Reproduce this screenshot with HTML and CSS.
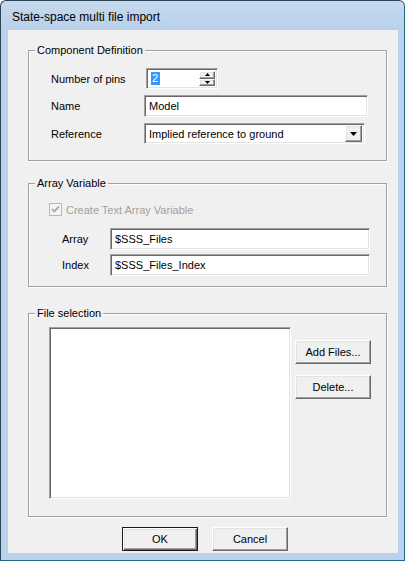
FILE: index.html
```html
<!DOCTYPE html>
<html>
<head>
<meta charset="utf-8">
<title>State-space multi file import</title>
<link rel="stylesheet" href="styles.css">
</head>
<body>
<div class="window">
  <div class="titlebar"><span class="title">State-space multi file import</span></div>
  <div class="client">

    <div class="group g1">
      <span class="legend">Component Definition</span>
      <div class="row r-pins">
        <span class="lbl">Number of pins</span>
        <div class="spin sunken">
          <span class="spin-text"><span class="sel">2</span><span class="caret"></span></span>
          <div class="spin-btns">
            <div class="sbtn raised"><svg width="5" height="3" viewBox="0 0 5 3"><path d="M2.5 0 L5 3 L0 3 Z" fill="#000"/></svg></div>
            <div class="sbtn raised"><svg width="5" height="3" viewBox="0 0 5 3"><path d="M0 0 L5 0 L2.5 3 Z" fill="#000"/></svg></div>
          </div>
        </div>
      </div>
      <div class="row r-name">
        <span class="lbl">Name</span>
        <div class="edit sunken w-name">Model</div>
      </div>
      <div class="row r-ref">
        <span class="lbl">Reference</span>
        <div class="combo sunken">
          <span class="combo-text">Implied reference to ground</span>
          <div class="ddbtn raised"><svg width="7" height="4" viewBox="0 0 7 4"><path d="M0 0 L7 0 L3.5 4 Z" fill="#000"/></svg></div>
        </div>
      </div>
    </div>

    <div class="group g2">
      <span class="legend">Array Variable</span>
      <div class="check-row">
        <svg class="chk" width="13" height="13" viewBox="0 0 13 13">
          <rect x="0.5" y="0.5" width="12" height="12" fill="#f4f4f4" stroke="#b8b8b8"/>
          <path d="M3 6 L5.2 8.4 L10 3.6" fill="none" stroke="#a8a8a8" stroke-width="1.8"/>
        </svg>
        <span class="disabled">Create Text Array Variable</span>
      </div>
      <div class="row r-array">
        <span class="lbl2">Array</span>
        <div class="edit sunken w-arr">$SSS_Files</div>
      </div>
      <div class="row r-index">
        <span class="lbl2">Index</span>
        <div class="edit sunken w-arr">$SSS_Files_Index</div>
      </div>
    </div>

    <div class="group g3">
      <span class="legend">File selection</span>
      <div class="files">
        <div class="listbox sunken"></div>
        <div class="side-btns">
          <div class="btn raised">Add Files...</div>
          <div class="btn raised">Delete...</div>
        </div>
      </div>
    </div>

    <div class="footer">
      <div class="btn default">OK</div>
      <div class="btn raised">Cancel</div>
    </div>

  </div>
</div>
</body>
</html>
```

FILE: styles.css
```css
* { box-sizing: border-box; }
html, body { margin: 0; padding: 0; }
body {
  width: 405px;
  height: 561px;
  background: #ffffff;
  font-family: "Liberation Sans", Arial, sans-serif;
  font-size: 11px;
  color: #000;
}
.window {
  width: 405px;
  height: 561px;
  border: 1px solid #2c4556;
  border-right-color: #1f6d86;
  border-bottom-color: #1f6d86;
  border-radius: 6px 6px 0 0;
  background: linear-gradient(#c6d9ee, #b9d1ea 28px, #b9d1ea);
  display: flex;
  flex-direction: column;
}
.titlebar {
  height: 29px;
  flex: none;
  display: flex;
  align-items: center;
  padding-left: 11px;
  padding-top: 3px;
}
.title {
  font-size: 12px;
  color: #000;
}
.client {
  margin: 0 6px 7px 7px;
  flex: 1;
  background: #f0f0f0;
  padding-top: 20px;
}

/* 3D borders */
.sunken {
  border: 1px solid;
  border-color: #a0a0a0 #ffffff #ffffff #a0a0a0;
  box-shadow: inset 1px 1px 0 #696969, inset -1px -1px 0 #e3e3e3;
  background: #fff;
}
.raised {
  border: 1px solid;
  border-color: #ffffff #696969 #696969 #ffffff;
  box-shadow: inset -1px -1px 0 #a0a0a0, inset 1px 1px 0 #e3e3e3;
  background: #f0f0f0;
}

/* group boxes */
.group {
  position: relative;
  margin-left: 20px;
  margin-right: 11px;
  border: 1px solid #a0a0a0;
  box-shadow: inset 1px 1px 0 #ffffff, 1px 1px 0 #ffffff;
}
.legend {
  position: absolute;
  top: -7px;
  left: 6px;
  padding: 0 2px;
  background: #f0f0f0;
  line-height: 13px;
}
.g1 { height: 111px; padding: 17px 0 0 22px; }
.g2 { height: 104px; margin-top: 22px; padding: 19px 0 0 20px; }
.g3 { height: 204px; margin-top: 26px; padding: 13px 0 0 20px; }

.row {
  display: flex;
  align-items: center;
}
.lbl { width: 93px; flex: none; }
.r-name { margin-top: 6px; }
.r-ref { margin-top: 6px; }

.spin {
  margin-left: 2px;
  width: 72px;
  height: 21px;
  display: flex;
  padding: 2px;
}
.spin-text {
  flex: 1;
  display: flex;
  align-items: center;
  padding-left: 2px;
}
.sel {
  background: #3399ff;
  color: #fff;
  padding: 0 1px;
  line-height: 13px;
}
.caret {
  width: 1px;
  height: 13px;
  background: #e07030;
}
.spin-btns {
  width: 16px;
  display: flex;
  flex-direction: column;
  justify-content: space-between;
}
.sbtn {
  height: 8px;
  display: flex;
  align-items: center;
  justify-content: center;
}

.edit {
  height: 22px;
  display: flex;
  align-items: center;
  padding-left: 4px;
}
.w-name { width: 224px; }

.combo {
  width: 221px;
  height: 21px;
  display: flex;
  align-items: center;
  padding: 2px;
}
.combo-text { flex: 1; padding-left: 2px; }
.ddbtn {
  width: 17px;
  height: 17px;
  display: flex;
  align-items: center;
  justify-content: center;
}

/* array group */
.check-row {
  display: flex;
  align-items: center;
  height: 13px;
}
.chk { flex: none; display: block; }
.disabled { color: #a0a0a0; margin-left: 4px; }
.lbl2 { width: 61px; flex: none; padding-left: 13px; }
.r-array { margin-top: 12px; }
.r-index { margin-top: 4px; }
.w-arr { width: 260px; }

/* file selection */
.files { display: flex; }
.listbox { width: 242px; height: 172px; }
.side-btns {
  margin-left: 4px;
  padding-top: 13px;
  display: flex;
  flex-direction: column;
  gap: 11px;
}
.btn {
  width: 76px;
  height: 24px;
  display: flex;
  align-items: center;
  justify-content: center;
}

.footer {
  display: flex;
  gap: 14px;
  padding-left: 114px;
  margin-top: 10px;
}
.btn.default {
  border: 1px solid #1a1a1a;
  background: #f0f0f0;
  box-shadow: inset 1px 1px 0 #ffffff, inset -1px -1px 0 #696969, inset -2px -2px 0 #a0a0a0, inset 2px 2px 0 #e3e3e3;
}
```
